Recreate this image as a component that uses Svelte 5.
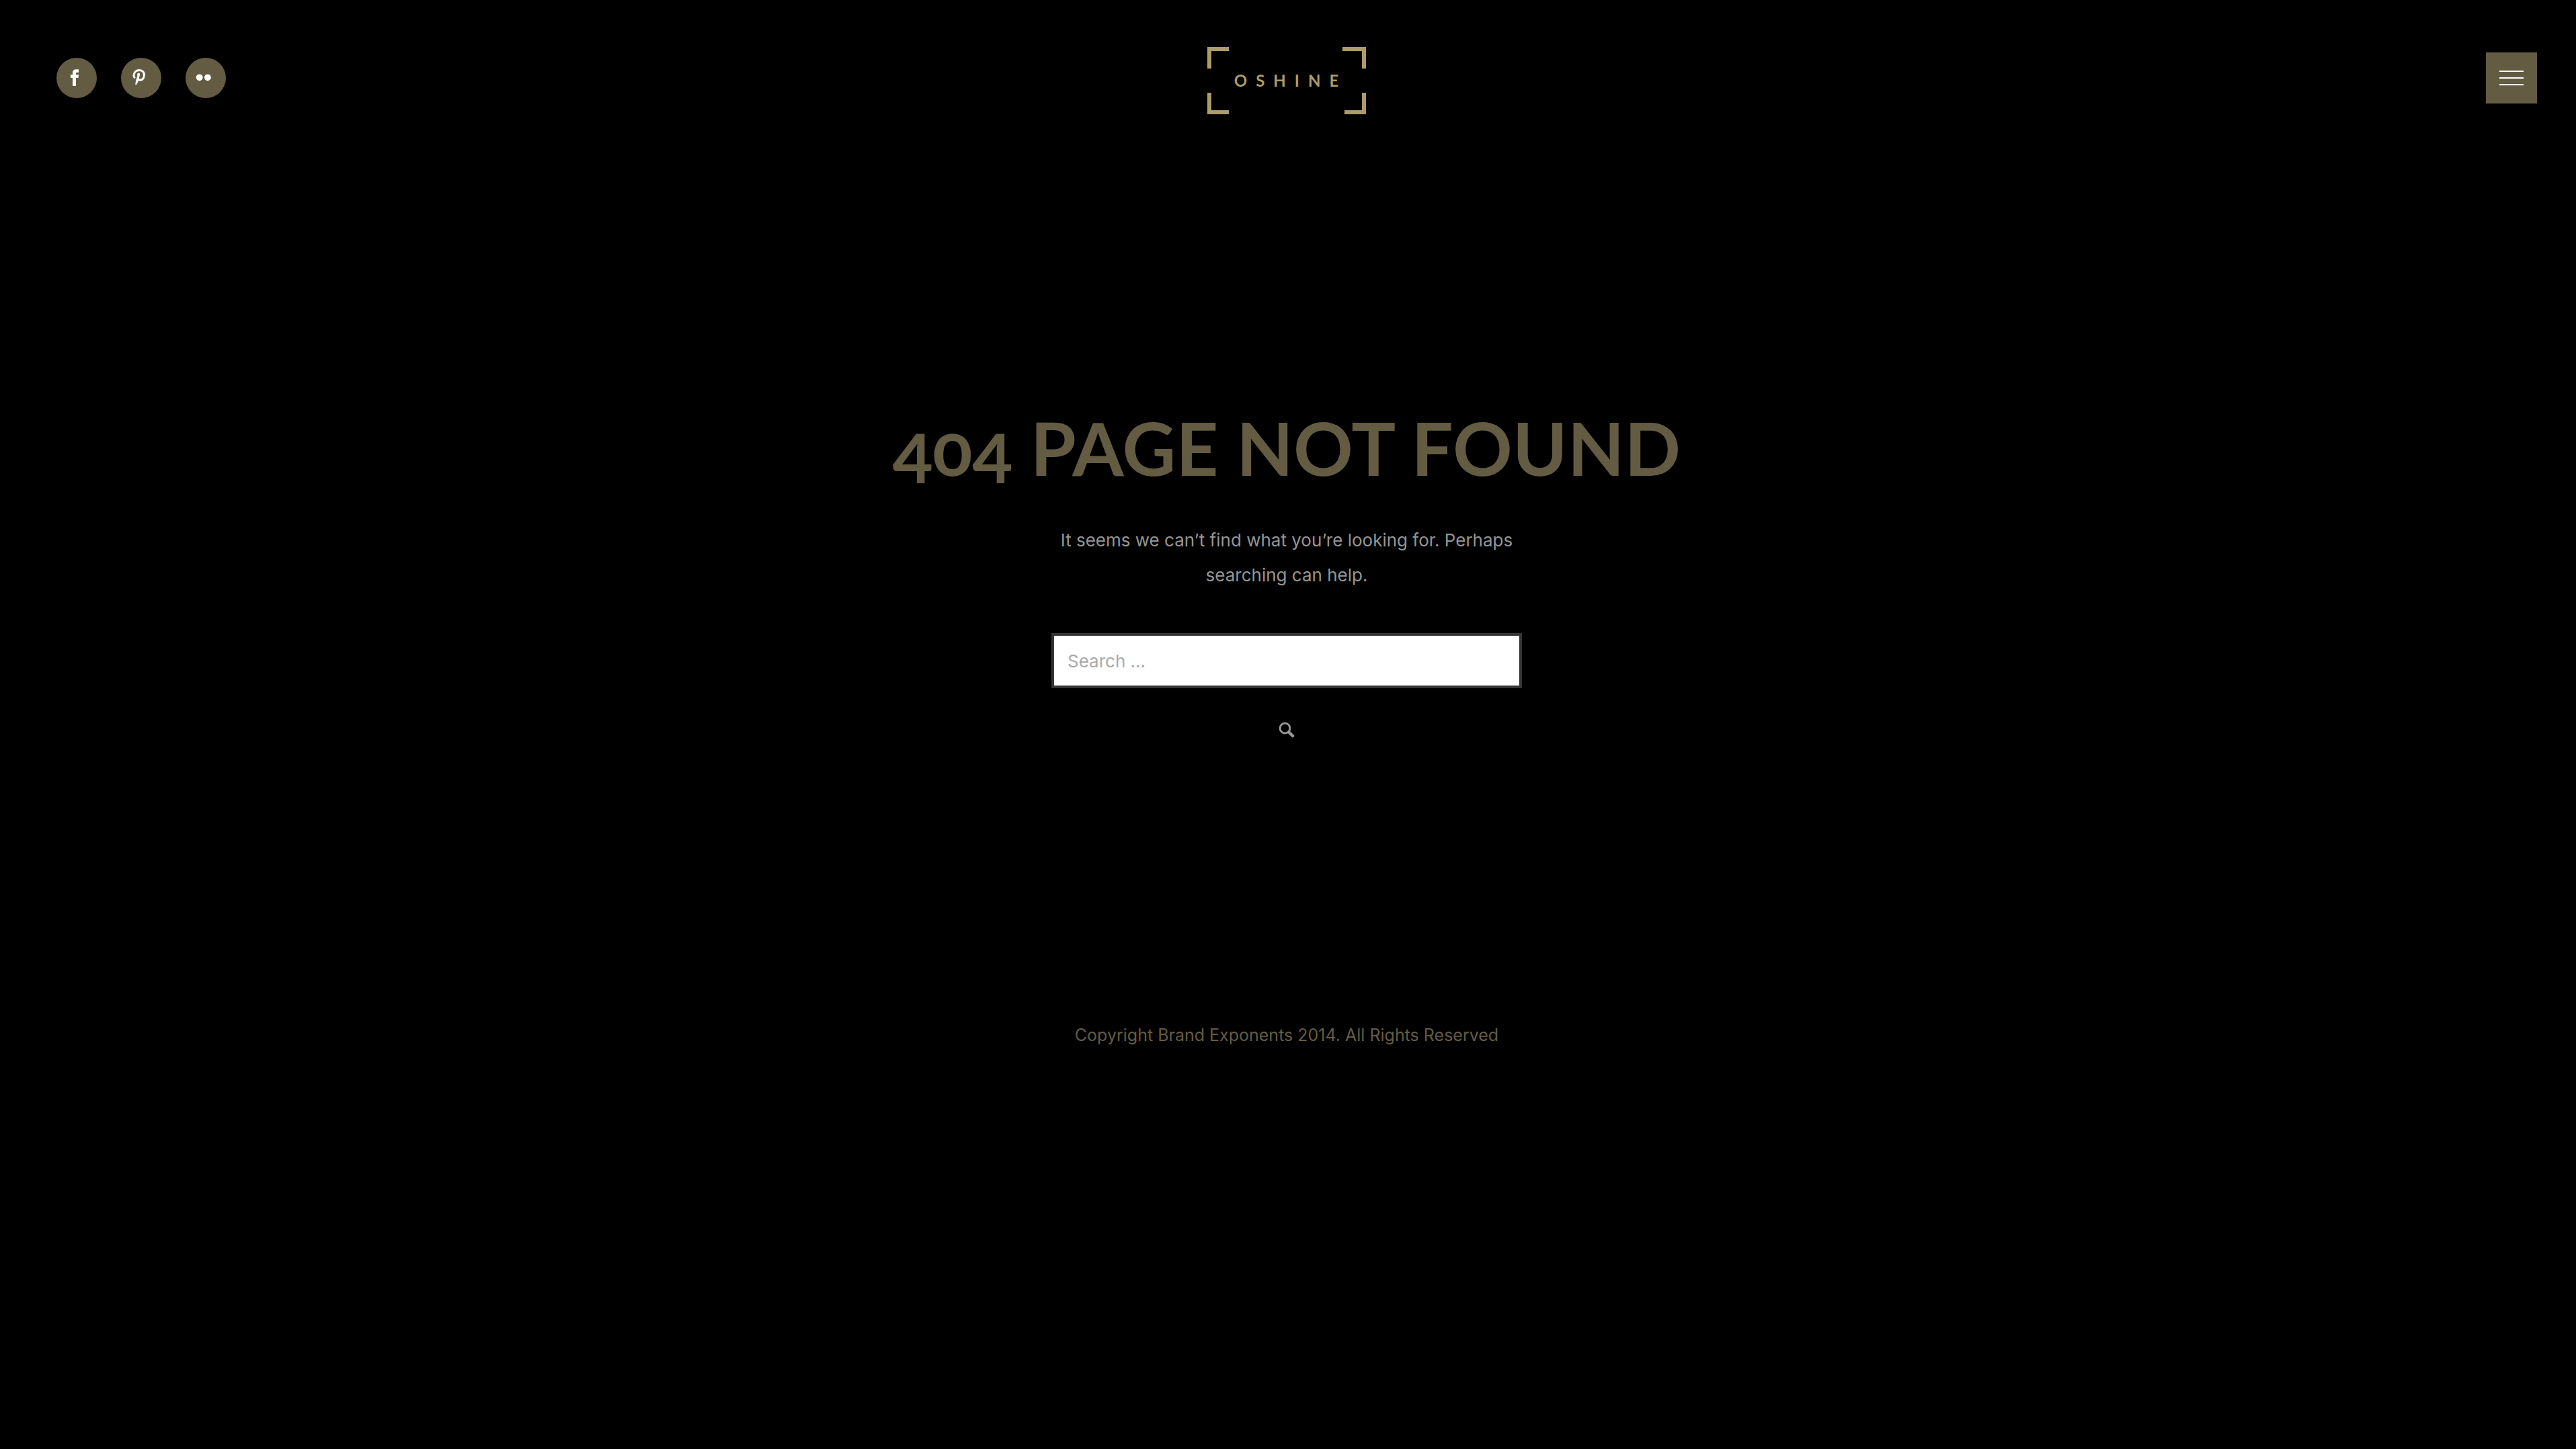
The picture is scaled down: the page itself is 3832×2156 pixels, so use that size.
<script>
  const social = [
    { name: 'Facebook', icon: 'facebook' },
    { name: 'Pinterest', icon: 'pinterest' },
    { name: 'Flickr', icon: 'flickr' }
  ];
  let query = $state('');
</script>

<div class="page">
  <header>
    <nav class="social" aria-label="Social links">
      {#each social as item}
        <a href="#{item.icon}" aria-label={item.name}>
          <svg viewBox="0 0 60 60" aria-hidden="true">
            {#if item.icon === 'facebook'}
              <path d="M24 42V30H21V25H24V22.500C24 18.800 26 17.300 29 17.300H33V21.800H30.600C29.400 21.800 29 22.400 29 23.300V25H33L32.500 30H29V42Z" />
            {:else if item.icon === 'pinterest'}
              <path class="stroke" d="M20.700 30.500C16.800 25.500 20.300 18.600 27.300 18.600C32.300 18.600 34.800 21.900 34.500 26C34.200 30.700 31.300 33.300 28.400 33.100C26.500 33 25.200 31.800 25.200 30.300" />
              <path d="M24.300 23.600C25 22.300 28.400 22.300 28.300 24.600L26.300 32.500C25.300 36.500 24.200 39 21.700 40.900C20.900 38 22.500 32.500 24.200 27.700Z" />
            {:else}
              <circle cx="20.700" cy="29.300" r="4.900" />
              <circle cx="32.900" cy="29.300" r="4.900" />
            {/if}
          </svg>
        </a>
      {/each}
    </nav>

    <a class="logo" href="#home" aria-label="Oshine">
      <svg viewBox="0 0 236 100" aria-hidden="true">
        <path d="M32 3H3V32M201 3H233V32M3 68V97H32M204 97H233V68" />
      </svg>
      <span>OSHINE</span>
    </a>

    <button class="menu" type="button" aria-label="Open menu">
      <i></i><i></i><i></i>
    </button>
  </header>

  <main>
    <h1>404 PAGE NOT FOUND</h1>
    <p>It seems we can’t find what you’re looking for. Perhaps searching can help.</p>
    <form role="search" onsubmit={(e) => e.preventDefault()}>
      <input type="search" aria-label="Search" placeholder="Search ..." bind:value={query} />
      <button type="submit" aria-label="Submit search">
        <svg viewBox="0 0 24 24" aria-hidden="true">
          <circle cx="9.500" cy="9.500" r="7.400" />
          <path d="M15.500 15.500L21 21" />
        </svg>
      </button>
    </form>
  </main>

  <footer>Copyright Brand Exponents 2014. All Rights Reserved</footer>
</div>

<style>
  :global(body) {
    margin: 0;
    background: #000;
  }
  .page {
    min-height: 100vh;
    box-sizing: border-box;
    padding-right: 4px;
    color: #959595;
    font-family: Inter, sans-serif;
    font-size: 26px;
    line-height: 52px;
  }
  header {
    display: grid;
    grid-template-columns: 1fr auto 1fr;
    align-items: center;
    padding: 70px 54px 0;
  }
  .social {
    display: flex;
    gap: 36px;
    padding: 0 0 8px 30px;
  }
  .social a {
    width: 60px;
    height: 60px;
    border-radius: 50%;
    background: #645b43;
  }
  .social svg {
    display: block;
    fill: #fff;
  }
  .social .stroke {
    fill: none;
    stroke: #fff;
    stroke-width: 3;
  }
  .logo {
    display: grid;
    place-items: center;
    width: 236px;
    height: 100px;
    color: #ac9c69;
    text-decoration: none;
  }
  .logo svg,
  .logo span {
    grid-area: 1 / 1;
  }
  .logo svg {
    width: 100%;
    fill: none;
    stroke: currentColor;
    stroke-width: 6;
  }
  .logo span {
    padding-left: 12px;
    font: bold 24px/28px Lato, sans-serif;
    letter-spacing: 13px;
  }
  .menu {
    justify-self: end;
    display: flex;
    flex-direction: column;
    align-items: center;
    justify-content: center;
    gap: 8px;
    width: 76px;
    height: 76px;
    margin-bottom: 8px;
    padding: 0;
    border: 0;
    background: #645b43;
  }
  .menu i {
    width: 36px;
    height: 2px;
    background: #fff;
  }
  main {
    display: flex;
    flex-direction: column;
    align-items: center;
    padding: 429px 40px 0;
    text-align: center;
  }
  h1 {
    margin: 0;
    color: #645b43;
    font: bold 110px/132px Lato, sans-serif;
    font-variant-numeric: oldstyle-nums;
  }
  p {
    max-width: 700px;
    margin: 47px 0 60px;
  }
  form {
    width: 100%;
    max-width: 700px;
  }
  input {
    display: block;
    box-sizing: border-box;
    width: 100%;
    height: 82px;
    padding: 0 20px;
    border: 4px solid #363434;
    border-radius: 0;
    outline: 0;
    background: #fff;
    color: #959595;
    font: inherit;
    appearance: none;
  }
  input::placeholder {
    color: #a9a9a9;
    opacity: 1;
  }
  form button {
    display: block;
    width: 24px;
    height: 24px;
    margin: 50px auto 0;
    padding: 0;
    border: 0;
    background: none;
  }
  form svg {
    display: block;
    fill: none;
    stroke: #959595;
    stroke-width: 3;
  }
  form path {
    stroke-width: 4.500;
    stroke-linecap: round;
  }
  footer {
    padding: 416px 40px 0;
    color: #645b43;
    font-size: 25px;
    text-align: center;
  }
</style>
